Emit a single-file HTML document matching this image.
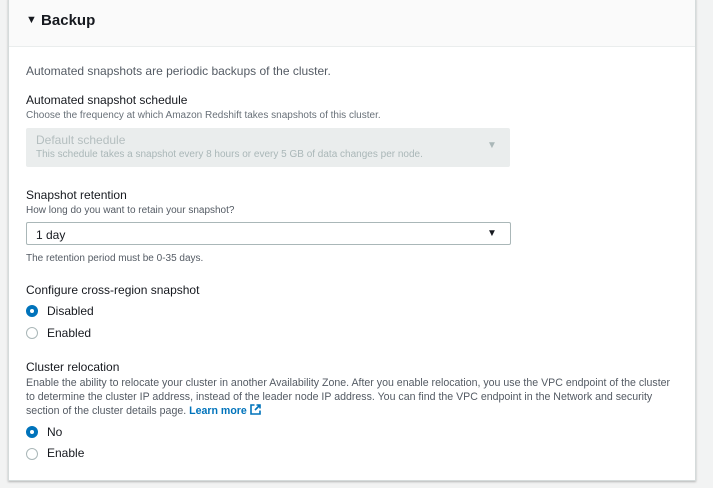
<!DOCTYPE html><html><head><style>
body{margin:0;width:713px;height:488px;background:#f2f3f3;font-family:"Liberation Sans",sans-serif;color:#16191f;position:relative;overflow:hidden}
.p{position:absolute;left:8px;top:-2px;width:686px;height:481px;background:#fff;border:1px solid #d5dbdb;box-shadow:0 1px 2px rgba(0,0,0,.25)}
.h{position:absolute;left:0;top:0;width:686px;height:47px;background:#fafafa;border-bottom:1px solid #eaeded}
.t{position:absolute;white-space:nowrap}
.l{font-size:12px;color:#16191f}
.s{font-size:10px;color:#687078}
.sel{position:absolute;left:17px;width:484px;border-radius:2px}
.r{position:absolute;left:17px;width:12px;height:12px;border-radius:50%;box-sizing:border-box}
.on{border:4px solid #0073bb;background:#fff}
.off{border:1px solid #aab7b8;background:#fff}
</style></head><body>
<div class="p">
<div class="h"><div class="t" style="left:17px;top:13px;font-size:15px;font-weight:bold"><span style="font-size:11px;vertical-align:2px">▼</span> Backup</div></div>
<div class="t l" style="left:17px;top:65px;color:#545b64">Automated snapshots are periodic backups of the cluster.</div>
<div class="t l" style="left:17px;top:94px">Automated snapshot schedule</div>
<div class="t s" style="left:17px;top:111px">Choose the frequency at which Amazon Redshift takes snapshots of this cluster.</div>
<div class="sel" style="top:129px;height:39px;background:#eaeded"></div>
<div class="t" style="left:27px;top:134px;font-size:12px;color:#b4bebf">Default schedule</div>
<div class="t" style="left:27px;top:150px;font-size:10px;color:#aab7b8">This schedule takes a snapshot every 8 hours or every 5 GB of data changes per node.</div>
<div class="t" style="left:478px;top:141px;font-size:10px;color:#aab7b8">▼</div>
<div class="t l" style="left:17px;top:189px">Snapshot retention</div>
<div class="t s" style="left:17px;top:206px;color:#545b64">How long do you want to retain your snapshot?</div>
<div class="sel" style="top:223px;height:23px;border:1px solid #aab7b8;box-sizing:border-box;width:485px"></div>
<div class="t l" style="left:27px;top:229px">1 day</div>
<div class="t" style="left:478px;top:229px;font-size:10px">▼</div>
<div class="t s" style="left:17px;top:254px;color:#545b64">The retention period must be 0-35 days.</div>
<div class="t l" style="left:17px;top:284px">Configure cross-region snapshot</div>
<div class="r on" style="top:306px"></div><div class="t l" style="left:38px;top:305px">Disabled</div>
<div class="r off" style="top:328px"></div><div class="t l" style="left:38px;top:327px">Enabled</div>
<div class="t l" style="left:17px;top:361px">Cluster relocation</div>
<div class="t s" style="left:17px;top:377px;line-height:14px;font-size:10.6px;color:#545b64">Enable the ability to relocate your cluster in another Availability Zone. After you enable relocation, you use the VPC endpoint of the cluster<br>to determine the cluster IP address, instead of the leader node IP address. You can find the VPC endpoint in the Network and security<br>section of the cluster details page. <b style="color:#0073bb">Learn more</b> <svg width="11" height="11" viewBox="0 0 11 11" style="vertical-align:-1px"><path d="M4.5 1H1v9h9V6.5M6.5 1H10v3.5M10 1L5 6" fill="none" stroke="#0073bb" stroke-width="1.6"/></svg></div>
<div class="r on" style="top:427px"></div><div class="t l" style="left:38px;top:426px">No</div>
<div class="r off" style="top:449px"></div><div class="t l" style="left:38px;top:447px">Enable</div>
</div>
</body></html>
